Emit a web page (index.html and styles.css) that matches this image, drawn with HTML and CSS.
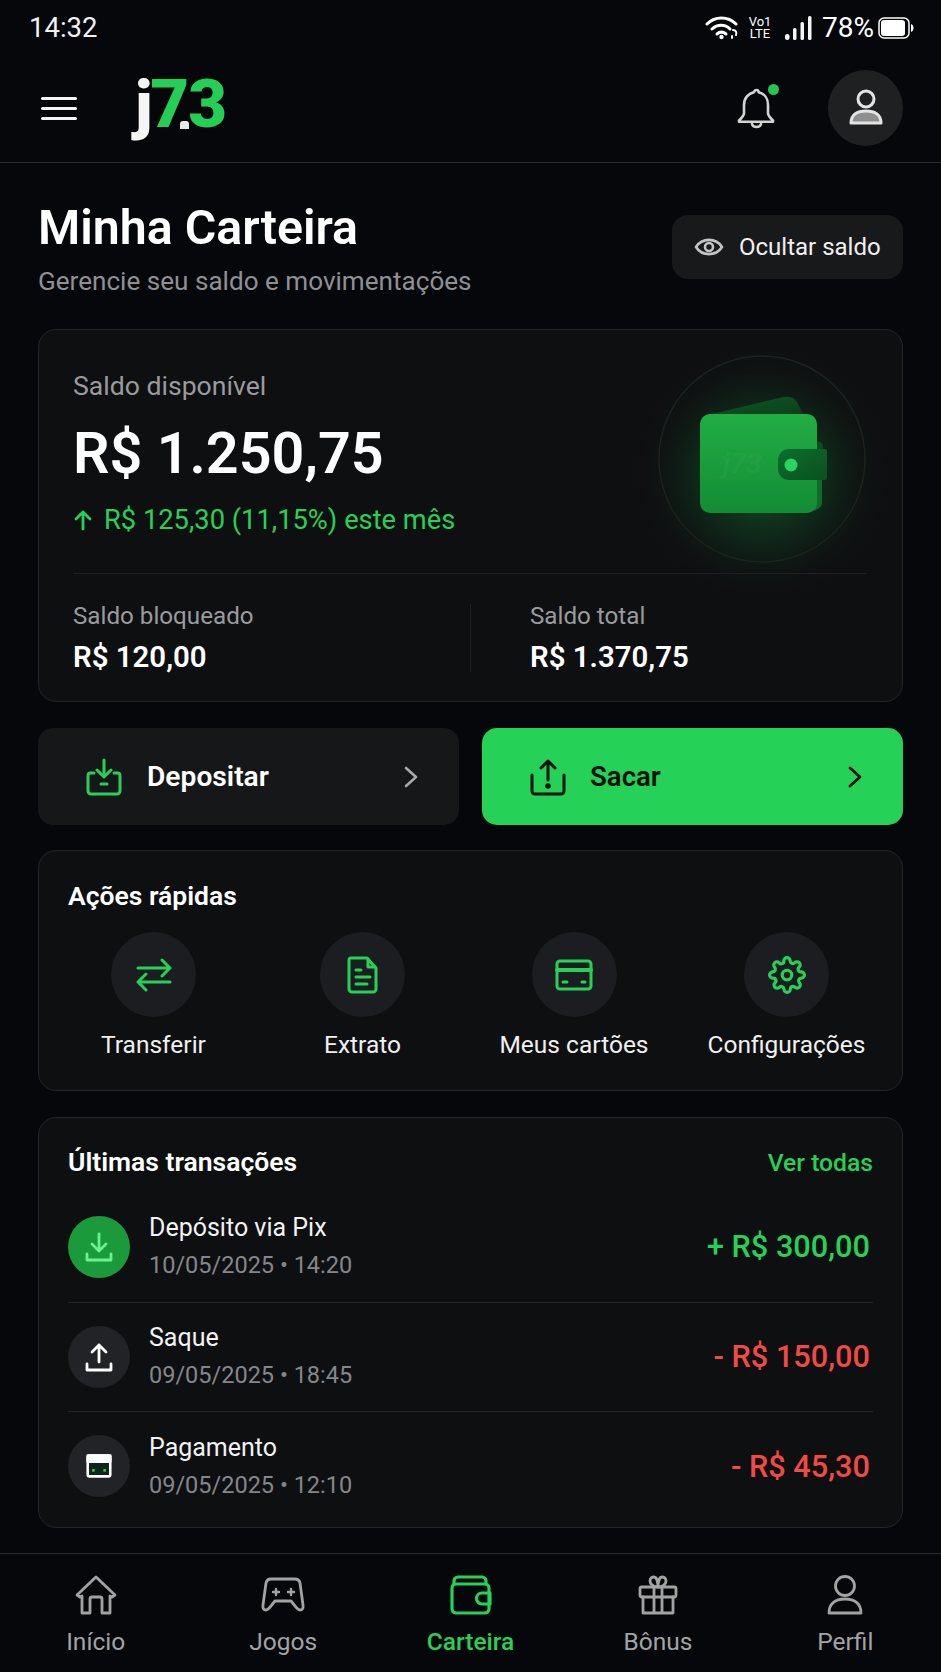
FILE: index.html
```html
<!DOCTYPE html>
<html lang="pt-BR">
<head>
<meta charset="utf-8">
<title>Minha Carteira</title>
<link rel="stylesheet" href="styles.css">
</head>
<body>
<div class="app">
  <div class="status">
    <span class="time">14:32</span>
    <div class="status-right">
      <svg class="st-wifi" width="34" height="24" viewBox="0 0 34 24" fill="none" stroke="#fff" stroke-linecap="round" stroke-width="3"><path d="M2 8C10 0 23 0 31 8"/><path d="M7 13c5.500-5 13-5 18 0"/><path d="M12 18c3-2.500 6-2.500 9 0"/><circle cx="16.500" cy="21" r="2.200" fill="#fff" stroke="none"/><path d="M28 14c3 0 4 3 3 5M27 20v2" stroke-width="2"/></svg>
      <span class="volte"><span>Vo1</span><span>LTE</span></span>
      <svg class="st-signal" width="27" height="24" viewBox="0 0 27 24" fill="#f4f4f4"><rect x="0" y="18" width="4.500" height="6" rx="2.200"/><rect x="8" y="12" width="3.500" height="12" rx="1.500"/><rect x="15.500" y="6" width="3.500" height="18" rx="1.500"/><rect x="23" y="0" width="3.500" height="24" rx="1.500"/></svg>
      <span class="pct">78%</span>
      <svg class="st-batt" width="36" height="22" viewBox="0 0 36 22" fill="none"><rect x="1" y="1" width="30" height="20" rx="5" stroke="#fff" stroke-width="1.500"/><rect x="3" y="3" width="24" height="16" rx="3" fill="#fff"/><path d="M33 7c2 1 2.500 2.500 2.500 4s-.5 3-2.500 4z" fill="#fff"/></svg>
    </div>
  </div>

  <header class="topbar">
    <div class="burger"><i></i><i></i><i></i></div>
    <div class="logo"><span class="logo-j">j</span><span class="logo-n">73</span><i class="logo-dot"></i></div>
    <div class="bell">
      <svg width="40" height="42" viewBox="0 0 40 42" fill="none" stroke="#d4d4d4" stroke-width="2.600" stroke-linejoin="round" stroke-linecap="round"><path d="M19.500 3c1.500 0 2 1 2.200 2.200C27.500 6.500 31 11.500 31 18v8c0 3 3 5.500 5 7.500v1.200H2v-1.200c2-2 5-4.500 5-7.500v-8C7 11.500 11 6.500 17 5.200 17.400 4 18 3 19.500 3z"/><path d="M15 37c1 4 8 4 9 0"/></svg>
      <i class="bell-dot"></i>
    </div>
    <div class="avatar">
      <svg width="36" height="40" viewBox="0 0 36 40" fill="none"><circle cx="18" cy="11" r="8" stroke="#e4e4e4" stroke-width="3"/><path d="M3 35c0-8 6-12 15-12s15 4 15 12z" fill="#8f8f8f" stroke="#e4e4e4" stroke-width="3" stroke-linejoin="round"/></svg>
    </div>
  </header>

  <main class="content">
    <section class="page-head">
      <div>
        <h1 class="title">Minha Carteira</h1>
        <p class="subtitle">Gerencie seu saldo e movimentações</p>
      </div>
      <div class="hide-btn">
        <svg width="30" height="24" viewBox="0 0 30 24" fill="none" stroke="#c4c4c4" stroke-width="2.600"><path d="M2 12C8 2.500 22 2.500 28 12 22 21.500 8 21.500 2 12z" stroke-linejoin="round"/><circle cx="15" cy="12" r="4"/></svg>
        <span>Ocultar saldo</span>
      </div>
    </section>

    <section class="card balance">
      <svg class="wallet-art" width="264" height="260" viewBox="0 0 264 260" fill="none">
        <defs>
          <radialGradient id="glow" cx="49%" cy="54%" r="50%"><stop offset="0" stop-color="#1fc24c" stop-opacity=".4"/><stop offset=".55" stop-color="#14963a" stop-opacity=".15"/><stop offset="1" stop-color="#0e0f11" stop-opacity="0"/></radialGradient>
          <linearGradient id="body" x1="0" y1="0" x2="0" y2="1"><stop offset="0" stop-color="#22ad44"/><stop offset="1" stop-color="#138c35"/></linearGradient>
          <linearGradient id="flap" x1="0" y1="0" x2="1" y2="1"><stop offset="0" stop-color="#0c5a25"/><stop offset="1" stop-color="#0c3f1c"/></linearGradient>
          <linearGradient id="strap" x1="0" y1="0" x2="1" y2="1"><stop offset="0" stop-color="#0d6f2c"/><stop offset="1" stop-color="#0b4f20"/></linearGradient>
        </defs>
        <rect width="264" height="260" fill="url(#glow)"/>
        <circle cx="129" cy="126" r="103" stroke="#1a241d" stroke-width="1.500"/>
        <path d="M79 81l71-17c6-1 11 0 14 5l6 12z" fill="url(#flap)"/>
        <path d="M184 146h5v24c0 3-3 6-8 8z" fill="#0f6b2a"/>
        <path d="M184 108l5 2 1 6h-6z" fill="#0c4d20"/>
        <rect x="67" y="81" width="117" height="99" rx="10" fill="url(#body)"/>
        <text x="90" y="140" class="wallet-mark">j73</text>
        <path d="M156 116h36c1 0 2 1 2 2v27c0 1-1 2-2 2h-36a11 11 0 0 1-11-11v-9a11 11 0 0 1 11-11z" fill="url(#strap)"/>
        <circle cx="158" cy="132" r="6.500" fill="#2bd45c"/>
      </svg>
      <div class="bal-label">Saldo disponível</div>
      <div class="bal-value">R$ 1.250,75</div>
      <div class="bal-change">
        <svg width="20" height="22" viewBox="0 0 20 22" fill="none" stroke="#25d156" stroke-width="2.800" stroke-linecap="round" stroke-linejoin="round"><path d="M10 20V3M3 10l7-7 7 7"/></svg>
        <span>R$ 125,30 (11,15%) este mês</span>
      </div>
      <div class="bal-rule"></div>
      <div class="bal-split">
        <div class="bal-col">
          <div class="mini-label">Saldo bloqueado</div>
          <div class="mini-value">R$ 120,00</div>
        </div>
        <div class="bal-col bal-col-r">
          <div class="mini-label">Saldo total</div>
          <div class="mini-value">R$ 1.370,75</div>
        </div>
      </div>
    </section>

    <section class="cta-row">
      <div class="cta cta-dark">
        <svg width="38" height="38" viewBox="0 0 38 38" fill="none" stroke="#25d156" stroke-width="3" stroke-linecap="round" stroke-linejoin="round"><path d="M19 2v17M12 12l7 7 7-7"/><path d="M9 15H5a2.500 2.500 0 0 0-2 2.500V33a3 3 0 0 0 3 3h26a3 3 0 0 0 3-3V17.500A2.500 2.500 0 0 0 33 15h-4"/><path d="M16 26h6"/></svg>
        <span class="cta-text">Depositar</span>
        <svg class="chev" width="14" height="22" viewBox="0 0 14 22" fill="none" stroke="#a8a8a8" stroke-width="2.600" stroke-linecap="round" stroke-linejoin="round"><path d="M2 2l10 9-10 9"/></svg>
      </div>
      <div class="cta cta-green">
        <svg width="38" height="38" viewBox="0 0 38 38" fill="none" stroke="#07130a" stroke-width="3" stroke-linecap="round" stroke-linejoin="round"><path d="M19 22V3M12 10l7-7 7 7"/><path d="M3 17v16a3 3 0 0 0 3 3h26a3 3 0 0 0 3-3V17"/><circle cx="19" cy="28" r="1.300" fill="#07130a"/></svg>
        <span class="cta-text cta-text-g">Sacar</span>
        <svg class="chev" width="14" height="22" viewBox="0 0 14 22" fill="none" stroke="#07130a" stroke-width="2.800" stroke-linecap="round" stroke-linejoin="round"><path d="M2 2l10 9-10 9"/></svg>
      </div>
    </section>

    <section class="card quick">
      <h2 class="card-title quick-title">Ações rápidas</h2>
      <div class="quick-grid">
        <div class="quick-item">
          <div class="q-ico"><svg width="38" height="34" viewBox="0 0 38 34" fill="none" stroke="#25d156" stroke-width="3" stroke-linecap="round" stroke-linejoin="round"><path d="M3 10h32M27 2l8 8-8 8"/><path d="M35 24H3M11 16l-8 8 8 8"/></svg></div>
          <span>Transferir</span>
        </div>
        <div class="quick-item">
          <div class="q-ico"><svg width="32" height="38" viewBox="0 0 32 38" fill="none" stroke="#25d156" stroke-width="3" stroke-linecap="round" stroke-linejoin="round"><path d="M4 2h16l9 10v21a3 3 0 0 1-3 3H5a3 3 0 0 1-3-3V4a2 2 0 0 1 2-2z"/><path d="M21 3v8h7"/><path d="M9 14h5M9 21h14M9 28h11"/></svg></div>
          <span>Extrato</span>
        </div>
        <div class="quick-item">
          <div class="q-ico"><svg width="38" height="32" viewBox="0 0 38 32" fill="none" stroke="#25d156" stroke-width="3" stroke-linecap="round" stroke-linejoin="round"><rect x="2" y="2" width="34" height="28" rx="3"/><path d="M2 11h34" stroke-width="4"/><path d="M8 23h4M27 23h3"/></svg></div>
          <span>Meus cartões</span>
        </div>
        <div class="quick-item">
          <div class="q-ico"><svg width="38" height="40" viewBox="0 0 24 24" fill="none" stroke="#25d156" stroke-width="2" stroke-linecap="round" stroke-linejoin="round"><circle cx="12" cy="12" r="3"/><path d="M19.400 15a1.650 1.650 0 0 0 .33 1.820l.06.06a2 2 0 1 1-2.830 2.830l-.06-.06a1.650 1.650 0 0 0-2.820 1.170V21a2 2 0 0 1-4 0v-.09a1.650 1.650 0 0 0-2.820-1.170l-.06.06a2 2 0 1 1-2.830-2.830l.06-.06A1.650 1.650 0 0 0 3.090 14H3a2 2 0 0 1 0-4h.09a1.650 1.650 0 0 0 1.170-2.820l-.06-.06a2 2 0 1 1 2.830-2.830l.06.06A1.650 1.650 0 0 0 10 3.090V3a2 2 0 0 1 4 0v.09a1.650 1.650 0 0 0 2.820 1.170l.06-.06a2 2 0 1 1 2.830 2.830l-.06.06A1.650 1.650 0 0 0 20.910 10H21a2 2 0 0 1 0 4h-.09a1.650 1.650 0 0 0-1.510 1z"/></svg></div>
          <span>Configurações</span>
        </div>
      </div>
    </section>

    <section class="card tx">
      <div class="tx-head">
        <h2 class="card-title">Últimas transações</h2>
        <span class="see-all">Ver todas</span>
      </div>
      <div class="tx-row">
        <div class="tx-ico tx-ico-green"><svg width="28" height="30" viewBox="0 0 28 30" fill="none" stroke="#6cf093" stroke-width="2.800" stroke-linecap="round" stroke-linejoin="round"><path d="M14 2v17M7 12l7 7 7-7"/><path d="M2 22v6h24v-6"/></svg></div>
        <div class="tx-info"><div class="tx-name">Depósito via Pix</div><div class="tx-date">10/05/2025 • 14:20</div></div>
        <div class="tx-amt pos">+ R$ 300,00</div>
      </div>
      <div class="tx-row">
        <div class="tx-ico"><svg width="28" height="30" viewBox="0 0 28 30" fill="none" stroke="#fff" stroke-width="2.800" stroke-linecap="round" stroke-linejoin="round"><path d="M14 20V3M7 10l7-7 7 7"/><path d="M2 22v6h24v-6"/></svg></div>
        <div class="tx-info"><div class="tx-name">Saque</div><div class="tx-date">09/05/2025 • 18:45</div></div>
        <div class="tx-amt neg">- R$ 150,00</div>
      </div>
      <div class="tx-row">
        <div class="tx-ico"><svg width="26" height="26" viewBox="0 0 30 28" fill="none" stroke="#fff" stroke-width="3" stroke-linejoin="round"><rect x="2" y="2" width="26" height="24" rx="2" fill="#10251a"/><path d="M2 2h26v7H2z" fill="#fff"/><path d="M7 19h3" stroke="#25d156"/><path d="M20 19h3" stroke="#25d156"/></svg></div>
        <div class="tx-info"><div class="tx-name">Pagamento</div><div class="tx-date">09/05/2025 • 12:10</div></div>
        <div class="tx-amt neg">- R$ 45,30</div>
      </div>
    </section>
  </main>

  <nav class="tabbar">
    <div class="tab">
      <svg width="42" height="40" viewBox="0 0 42 40" fill="none" stroke="#a3a3a3" stroke-width="2.800" stroke-linejoin="round" stroke-linecap="round"><path d="M2 20L21 2l19 18-3 2-2-1v17H27V24a2 2 0 0 0-2-2h-8a2 2 0 0 0-2 2v14H7V21l-2 1z"/></svg>
      <span>Início</span>
    </div>
    <div class="tab">
      <svg width="44" height="40" viewBox="0 0 44 40" fill="none" stroke="#a3a3a3" stroke-width="2.800" stroke-linejoin="round" stroke-linecap="round"><path d="M10 4h24c3 0 4.500 2 5 4l3 22c.5 4-1 5-3 5-3 0-3-2-9-9H14c-6 7-6 9-9 9-2 0-3.500-1-3-5L5 8c.5-2 2-4 5-4z"/><path d="M15 14v6M12 17h6M30 14v6M27 17h6" stroke-width="2.400"/></svg>
      <span>Jogos</span>
    </div>
    <div class="tab tab-on">
      <svg width="42" height="40" viewBox="0 0 42 40" fill="none" stroke="#25d156" stroke-width="3.200" stroke-linejoin="round" stroke-linecap="round"><path d="M4 9V6a4 4 0 0 1 4-4h24a4 4 0 0 1 4 4v3"/><rect x="2" y="9" width="37" height="29" rx="4"/><path d="M40 18H32a5 5 0 0 0 0 11h8z"/></svg>
      <span>Carteira</span>
    </div>
    <div class="tab">
      <svg width="40" height="40" viewBox="0 0 40 40" fill="none" stroke="#a3a3a3" stroke-width="2.800" stroke-linejoin="round" stroke-linecap="round"><rect x="2" y="12" width="36" height="10" rx="2"/><path d="M5 22v16h30V22M16 12v26M24 12v26"/><path d="M20 12c-5 0-8-3-8-6 0-3 2-4 4-4 3 0 4 6 4 10zM20 12c5 0 8-3 8-6 0-3-2-4-4-4-3 0-4 6-4 10z"/></svg>
      <span>Bônus</span>
    </div>
    <div class="tab">
      <svg width="36" height="40" viewBox="0 0 36 40" fill="none" stroke="#a3a3a3" stroke-width="2.800" stroke-linejoin="round"><ellipse cx="18" cy="11" rx="9.500" ry="9.500"/><path d="M2 38c0-9 6-14 16-14s16 5 16 14z"/></svg>
      <span>Perfil</span>
    </div>
  </nav>
</div>
</body>
</html>
```

FILE: styles.css
```css
* { box-sizing: border-box; }
html, body { margin: 0; padding: 0; background: #06070b; }
body { font-family: Roboto, "Liberation Sans", sans-serif; color: #fff; }
h1, h2, p { margin: 0; font: inherit; }

.app { width: 941px; height: 1672px; display: flex; flex-direction: column; overflow: hidden; background: #06070b; }

/* status bar */
.status { height: 56px; flex: none; display: flex; align-items: center; justify-content: space-between; padding: 0 27px 0 29px; }
.time { font-size: 27.500px; line-height: 1; color: #f2f2f2; }
.status-right { display: flex; align-items: center; }
.st-wifi { margin-right: 9px; }
.volte { display: flex; flex-direction: column; width: 24px; font-size: 13px; line-height: 12px; align-items: center; margin-right: 13px; }
.st-signal { margin-right: 10px; }
.pct { font-size: 28px; line-height: 1; margin-right: 4px; }

/* top bar */
.topbar { height: 107px; flex: none; display: flex; align-items: center; padding: 0 38px 2px 41px; border-bottom: 1px solid #2b2c2f; }
.burger { width: 36px; display: flex; flex-direction: column; gap: 7px; }
.burger i { display: block; height: 3px; border-radius: 2px; background: #f4f4f4; }
.logo { position: relative; margin-left: 58px; margin-bottom: 7px; display: flex; align-items: baseline; font-size: 67px; line-height: 67px; font-weight: 900; height: 67px; }
.logo-j { color: #f5f5f5; font-size: 64px; }
.logo-n { color: #24cf55; letter-spacing: -1px; margin-left: -2px; }
.logo-dot { position: absolute; left: 45px; top: 50px; width: 9px; height: 8px; border-radius: 3px 3px 0 0; background: #e8e8e8; }
.bell { position: relative; margin-left: auto; width: 40px; height: 42px; margin-right: 51px; }
.bell-dot { position: absolute; right: -2px; top: -3px; width: 11px; height: 11px; border-radius: 50%; background: #22c653; }
.avatar { width: 75px; height: 76px; border-radius: 50%; background: #1f2022; display: flex; align-items: center; justify-content: center; }

/* content */
.content { flex: 1; display: flex; flex-direction: column; gap: 26px; padding: 38px 38px 0; }
.page-head { display: flex; justify-content: space-between; align-items: flex-start; margin-bottom: 6px; }
.title { font-size: 48.300px; line-height: 52px; font-weight: 600; margin-top: 1px; }
.subtitle { margin-top: 11px; font-size: 26.100px; line-height: 32px; color: #8f9094; }
.hide-btn { margin-top: 14px; width: 231px; height: 64px; border-radius: 16px; background: #18191b; display: flex; align-items: center; padding-left: 22px; gap: 15px; font-size: 24px; color: #f0f0f0; }

.card { background: #0e0f11; border: 1px solid #24252a; border-radius: 18px; }

/* balance */
.balance { position: relative; height: 373px; padding: 39px 35px 0 34px; overflow: hidden; }
.wallet-art { position: absolute; left: 594px; top: 3px; }
.wallet-mark { font-family: Roboto, sans-serif; font-size: 28px; font-style: italic; font-weight: 700; fill: #ffffff; fill-opacity: .05; }
.bal-label { position: relative; font-size: 26.600px; line-height: 34px; color: #9a9b9e; }
.bal-value { position: relative; margin-top: 17px; font-size: 57.500px; line-height: 68px; font-weight: 600; }
.bal-change { position: relative; margin-top: 16px; display: flex; align-items: center; gap: 11px; font-size: 27.300px; line-height: 32px; color: #25d156; }
.bal-rule { position: relative; margin-top: 37px; height: 1px; background: #1e2023; }
.bal-split { position: relative; display: grid; grid-template-columns: 397px 1fr; margin-top: 30px; }
.bal-col-r { padding-left: 59px; border-left: 1px solid #1e2023; }
.mini-label { font-size: 24.200px; line-height: 24px; color: #9a9b9e; }
.mini-value { margin-top: 14px; font-size: 29.400px; line-height: 30px; font-weight: 600; }

/* CTA */
.cta-row { display: grid; grid-template-columns: 1fr 1fr; gap: 23px; height: 97px; }
.cta { display: flex; align-items: center; border-radius: 15px; padding: 0 41px 0 47px; }
.cta-dark { background: #161719; color: #fff; }
.cta-green { background: #25d156; color: #07130a; }
.cta-text { margin-left: 24px; font-size: 28.200px; font-weight: 600; }
.cta-text-g { margin-left: 23px; font-size: 27.600px; }
.chev { margin-left: auto; }

/* quick */
.quick { height: 241px; padding: 25px 10px 0; margin-top: -1px; }
.card-title { font-size: 26.500px; line-height: 40px; font-weight: 600; }
.quick-title { padding-left: 19px; }
.quick-grid { display: grid; grid-template-columns: 209px 209px 214px 1fr; margin-top: 16px; }
.quick-item { display: flex; flex-direction: column; align-items: center; gap: 12px; font-size: 24.500px; line-height: 32px; color: #f0f0f0; }
.q-ico { width: 85px; height: 85px; border-radius: 50%; background: #1c1d20; display: flex; align-items: center; justify-content: center; }

/* transactions */
.tx { height: 411px; padding: 24px 29px 0; }
.tx-head { display: flex; justify-content: space-between; align-items: center; margin-bottom: 10px; }
.see-all { font-size: 24.700px; color: #25d156; font-weight: 500; }
.tx-row { display: flex; align-items: center; height: 109.500px; gap: 19px; border-top: 1px solid #24252a; padding: 0 3px 0 0; }
.tx-head + .tx-row { border-top: 0; }
.tx-ico { width: 62px; height: 62px; flex: none; border-radius: 50%; background: #222326; display: flex; align-items: center; justify-content: center; }
.tx-ico-green { background: #1b9a3c; }
.tx-info { flex: 1; }
.tx-name { font-size: 25px; line-height: 32px; color: #f2f2f2; }
.tx-date { margin-top: 5px; font-size: 23.500px; line-height: 32px; color: #85868a; }
.tx-amt { font-size: 30.700px; font-weight: 500; }
.pos { color: #25d156; }
.neg { color: #f14a45; }

/* nav */
.tabbar { height: 119px; flex: none; display: flex; border-top: 1px solid #2b2c2f; padding: 21px 2px 0; }
.tab { flex: 1; display: flex; flex-direction: column; align-items: center; gap: 11px; font-size: 24.500px; line-height: 32px; color: #a3a3a3; }
.tab-on { color: #25d156; font-weight: 500; }
```
